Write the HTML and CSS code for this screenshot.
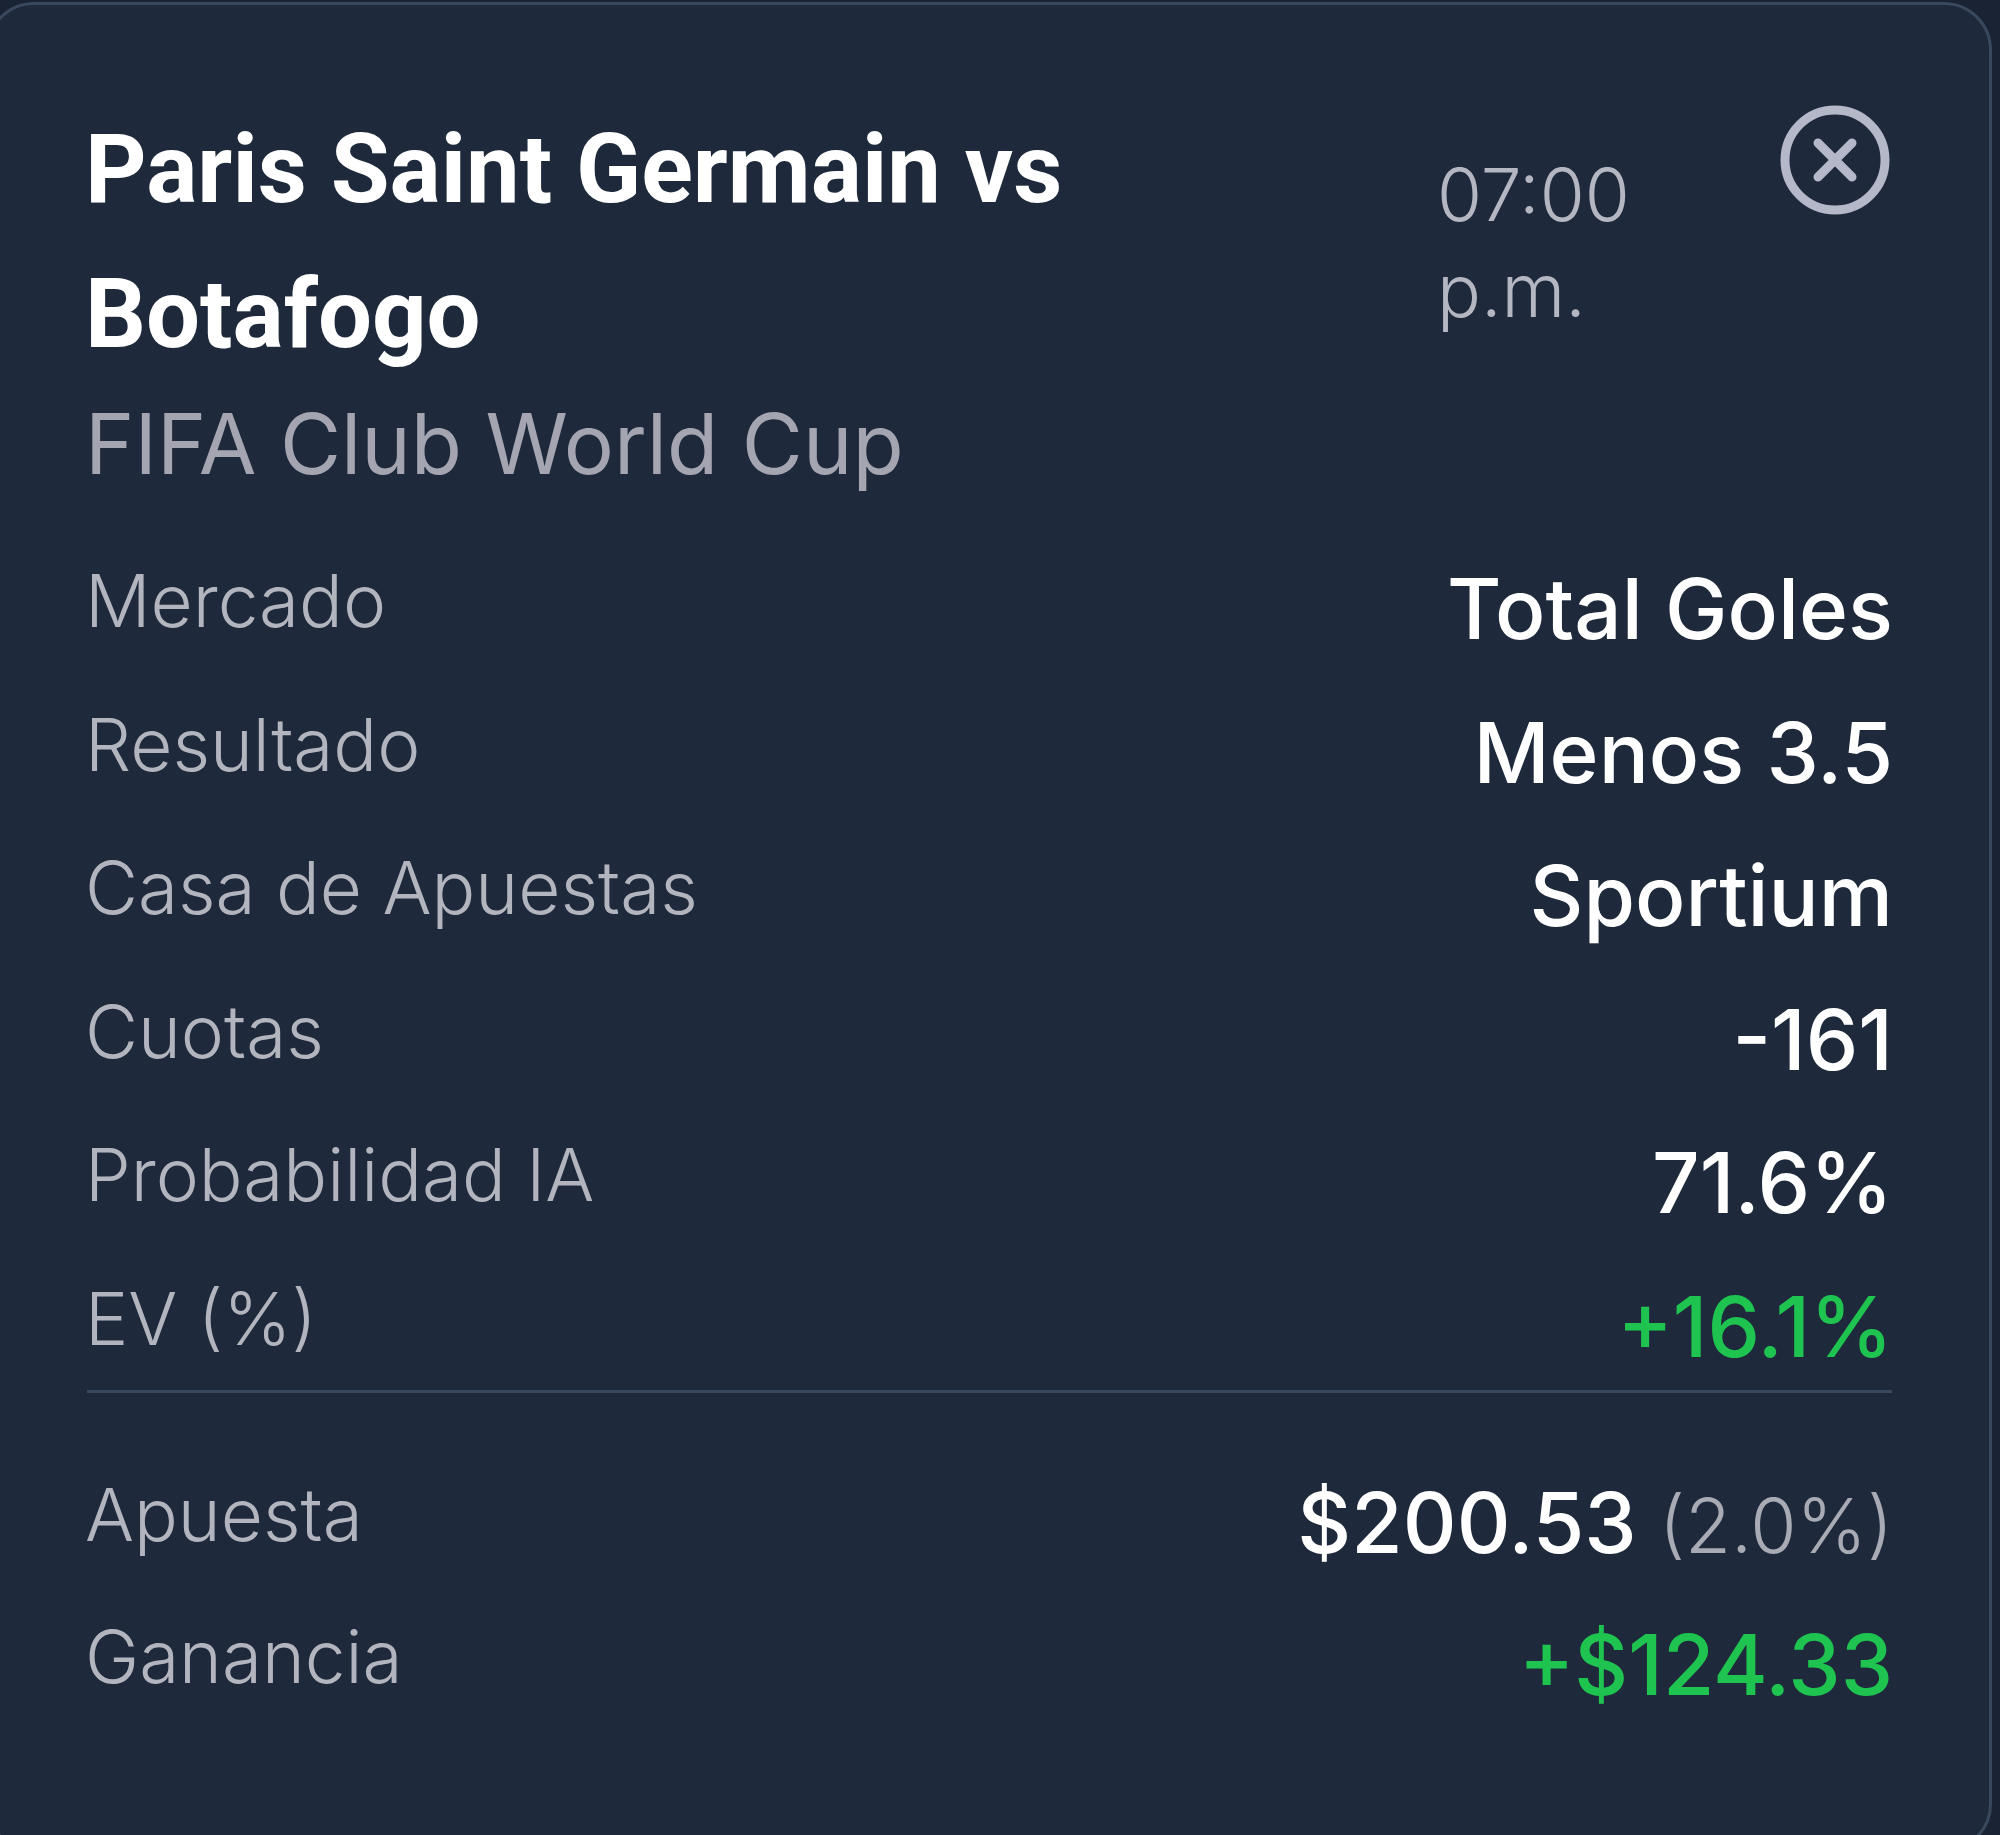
FILE: index.html
```html
<!DOCTYPE html>
<html lang="es">
<head>
<meta charset="utf-8">
<title>Paris Saint Germain vs Botafogo</title>
<link rel="stylesheet" href="styles.css">
</head>
<body>
<main class="card">
  <header class="head">
    <div class="match">
      <h1 class="title">Paris Saint Germain vs Botafogo</h1>
      <p class="league">FIFA Club World Cup</p>
    </div>
    <div class="time">07:00 p.m.</div>
    <svg class="close" viewBox="0 0 110 110" aria-label="Cerrar">
      <circle cx="55" cy="55" r="50" fill="none" stroke="#b5b8c8" stroke-width="9"/>
      <path d="M38 38 L72 72 M72 38 L38 72" fill="none" stroke="#b5b8c8" stroke-width="9" stroke-linecap="round"/>
    </svg>
  </header>
  <section class="rows">
    <div class="row"><span class="label">Mercado</span><span class="value">Total Goles</span></div>
    <div class="row"><span class="label">Resultado</span><span class="value">Menos 3.5</span></div>
    <div class="row"><span class="label">Casa de Apuestas</span><span class="value">Sportium</span></div>
    <div class="row"><span class="label">Cuotas</span><span class="value">-161</span></div>
    <div class="row"><span class="label">Probabilidad IA</span><span class="value">71.6%</span></div>
    <div class="row"><span class="label">EV (%)</span><span class="value green">+16.1%</span></div>
  </section>
  <section class="stake">
    <div class="row"><span class="label">Apuesta</span><span class="value">$200.53 <span class="pct">(2.0%)</span></span></div>
    <div class="row"><span class="label">Ganancia</span><span class="value green">+$124.33</span></div>
  </section>
</main>
</body>
</html>
```
FILE: styles.css
```css
* { box-sizing: border-box; }
html, body { margin: 0; height: 100%; }
body {
  width: 2000px;
  height: 1835px;
  overflow: hidden;
  background: #1a2333;
  font-family: Inter, "Liberation Sans", sans-serif;
}
.card {
  width: 2006px;
  height: 1850px;
  margin: 2px 0 0 -14px;
  padding: 92px 97px 0 98px;
  background: #1e293b;
  border: 3px solid #3a485e;
  border-radius: 48px;
}
.head {
  display: flex;
  align-items: flex-start;
}
.match { width: 1350px; }
.title {
  max-width: 1100px;
  margin: 0 0 0 -2px;
  font-family: Roboto, sans-serif;
  font-weight: 700;
  font-size: 95.7px;
  line-height: 145px;
  color: #fff;
}
.league {
  margin: 0 0 0 -2px;
  font-size: 83.7px;
  line-height: 113px;
  color: #a4a5b0;
}
.time {
  width: 200px;
  margin-top: 50px;
  font-size: 73px;
  font-weight: 300;
  line-height: 96px;
  color: #b4b7c2;
}
.close {
  width: 110px;
  height: 110px;
  flex: none;
  margin: 8px 2px 0 auto;
}
.rows {
  display: flex;
  flex-direction: column;
  gap: 35.6px;
  margin-top: 56px;
  padding-bottom: 8px;
  border-bottom: 3px solid #3a485e;
}
.row {
  display: flex;
  justify-content: space-between;
  align-items: flex-start;
  height: 108px;
}
.label {
  margin-left: -2px;
  font-size: 72.8px;
  font-weight: 300;
  line-height: 90px;
  color: #b3b5be;
}
.value {
  margin: 3px -1px 0 0;
  font-size: 83.5px;
  font-weight: 500;
  line-height: 100px;
  color: #fff;
}
.green { color: #1ec44f; }
.pct {
  font-size: 75px;
  font-weight: 300;
  color: #a8aab4;
}
.stake {
  display: flex;
  flex-direction: column;
  gap: 33.6px;
  padding-top: 77px;
}
```
